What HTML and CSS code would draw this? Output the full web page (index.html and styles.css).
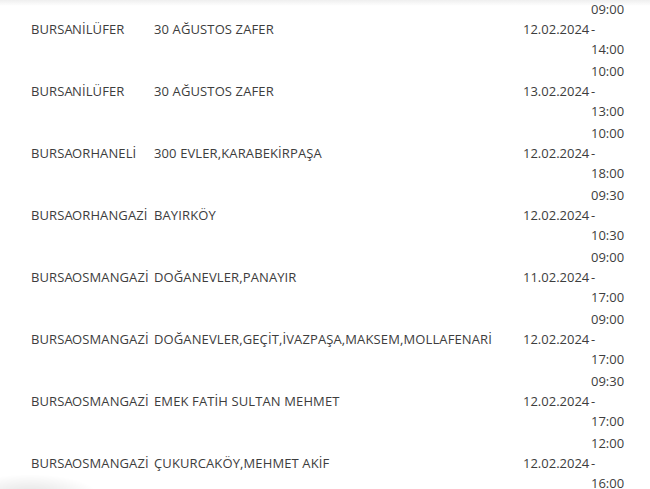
FILE: index.html
```html
<!DOCTYPE html>
<html lang="tr">
<head>
    <meta charset="UTF-8">
    <meta name="viewport" content="width=device-width, initial-scale=1.0">
    <title>Planlı Kesintiler</title>
    <link rel="stylesheet" href="styles.css">
</head>
<body>
    <div class="top-fade"></div>
    <table class="outages">
        <colgroup>
            <col class="c-city">
            <col class="c-district">
            <col class="c-area">
            <col class="c-date">
            <col class="c-time">
        </colgroup>
        <tbody>
            <tr><td>BURSA</td><td>NİLÜFER</td><td>30 AĞUSTOS ZAFER</td><td class="date">12.02.2024</td><td class="time">09:00 - 14:00</td></tr>
            <tr><td>BURSA</td><td>NİLÜFER</td><td>30 AĞUSTOS ZAFER</td><td class="date">13.02.2024</td><td class="time">10:00 - 13:00</td></tr>
            <tr><td>BURSA</td><td>ORHANELİ</td><td>300 EVLER,KARABEKİRPAŞA</td><td class="date">12.02.2024</td><td class="time">10:00 - 18:00</td></tr>
            <tr><td>BURSA</td><td>ORHANGAZİ</td><td>BAYIRKÖY</td><td class="date">12.02.2024</td><td class="time">09:30 - 10:30</td></tr>
            <tr><td>BURSA</td><td>OSMANGAZİ</td><td>DOĞANEVLER,PANAYIR</td><td class="date">11.02.2024</td><td class="time">09:00 - 17:00</td></tr>
            <tr><td>BURSA</td><td>OSMANGAZİ</td><td>DOĞANEVLER,GEÇİT,İVAZPAŞA,MAKSEM,MOLLAFENARİ</td><td class="date">12.02.2024</td><td class="time">09:00 - 17:00</td></tr>
            <tr><td>BURSA</td><td>OSMANGAZİ</td><td>EMEK FATİH SULTAN MEHMET</td><td class="date">12.02.2024</td><td class="time">09:30 - 17:00</td></tr>
            <tr><td>BURSA</td><td>OSMANGAZİ</td><td>ÇUKURCAKÖY,MEHMET AKİF</td><td class="date">12.02.2024</td><td class="time">12:00 - 16:00</td></tr>
        </tbody>
    </table>
    <div class="corner-shadow"></div>
</body>
</html>
```

FILE: styles.css
```css
body {
    margin: 0;
    background: #fff;
    font-family: "Open Sans", "Liberation Sans", sans-serif;
    font-size: 13px;
    letter-spacing: 0.12px;
    color: #3d3d3d;
    overflow: hidden;
}
.top-fade {
    position: fixed;
    top: 0;
    left: 0;
    right: 0;
    height: 6px;
    background: linear-gradient(#efefef, rgba(255, 255, 255, 0));
}
.outages {
    margin: -2px 0 0 31px;
    border-collapse: collapse;
    table-layout: fixed;
    width: 600px;
}
.c-city { width: 41px; }
.c-district { width: 82px; }
.c-area { width: 369px; }
.c-date { width: 68px; }
.c-time { width: 40px; }
.outages td {
    padding: 1px 0;
    line-height: 20px;
    vertical-align: middle;
    white-space: nowrap;
}
.outages .date,
.outages .time {
    letter-spacing: 0;
}
.outages .time {
    white-space: normal;
}
.corner-shadow {
    position: fixed;
    left: -40px;
    bottom: -30px;
    width: 140px;
    height: 45px;
    border-radius: 50%;
    background: radial-gradient(rgba(0, 0, 0, 0.12), rgba(0, 0, 0, 0) 70%);
}
```
